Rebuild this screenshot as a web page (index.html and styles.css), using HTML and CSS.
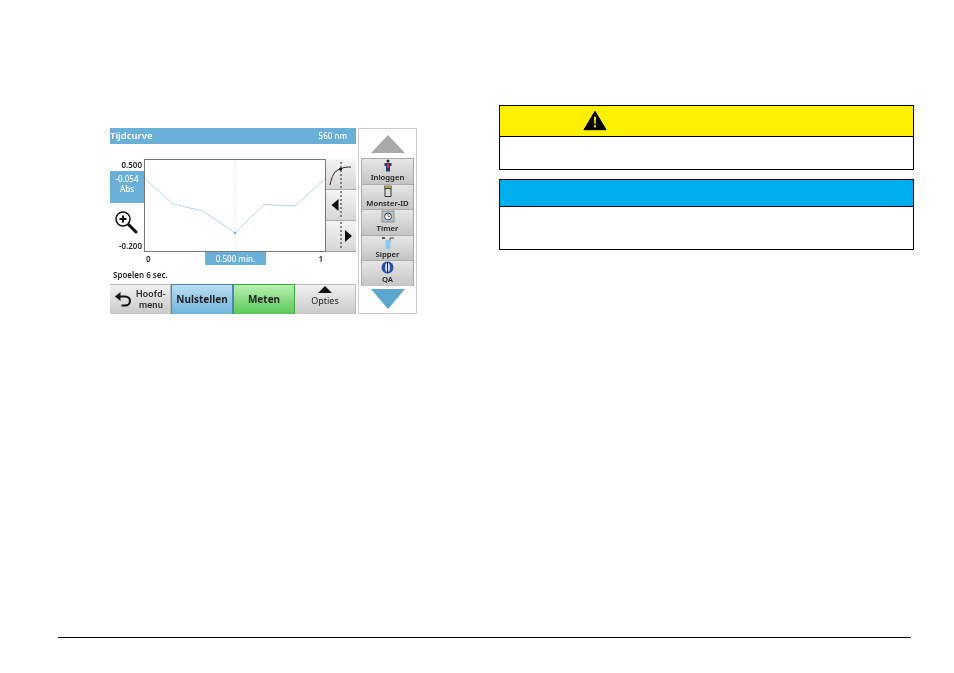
FILE: index.html
```html
<!doctype html>
<html>
<head>
 <title>Tijdcurve</title>
 <meta name=viewport content="width=device-width, initial-scale=1">
 <link rel="stylesheet" href="styles.css">
</head>
<body>
<div class=page>
 <div class=content>
  <div class=screen>
   <div class=main>
    <div class=title><span>Tijdcurve</span><span class=nm>560 nm</span></div>
    <div class=plot>
     <div class=yaxis>
      <div class=ylabel>0.500</div>
      <div class=absbox>-0.054<br>Abs</div>
      <div class=zoomicon>
       <svg width=24 height=24 viewBox="0 0 24 24">
        <line x1=13 y1=13 x2=22 y2=22 stroke="#111" stroke-width=3 stroke-linecap=round />
        <circle cx=9 cy=9 r=7 fill="#fff" stroke="#111" stroke-width=1.5 />
        <path d="M5.5 9h7M9 5.500v7" stroke="#111" stroke-width=2 />
       </svg>
      </div>
      <div class=ylabel>-0.200</div>
     </div>
     <div class=chart>
      <svg width=180 height=91 viewBox="145 160 180 91">
       <line x1=235 y1=160 x2=235 y2=251 stroke="#dbeaf3" stroke-width=1 stroke-dasharray="2 1" />
       <polyline points="144,178 173,204 203,211 235,233 264,204.500 295,206 326,178" fill=none stroke="#b4d6ea" stroke-width=1 />
       <circle cx=235 cy=233 r=1.300 fill="#6aafd6" />
      </svg>
     </div>
     <div class=tools>
      <div class=tool>
       <svg width=30 height=30 viewBox="0 0 30 30">
        <line x1=15 y1=3 x2=15 y2=29 stroke="#222" stroke-dasharray="2 2" />
        <path d="M4 26C6 17 8 12 14 10C18 8 22 8 25 8" fill=none stroke="#222" />
        <circle cx=14.500 cy=10 r=1.500 fill="#111" />
       </svg>
      </div>
      <div class=tool>
       <svg width=30 height=30 viewBox="0 0 30 30">
        <line x1=15 y1=1 x2=15 y2=29 stroke="#222" stroke-dasharray="2 2" />
        <path d="M12.500 9V21L5.500 15Z" fill="#111" />
       </svg>
      </div>
      <div class=tool>
       <svg width=30 height=30 viewBox="0 0 30 30">
        <line x1=15 y1=1 x2=15 y2=29 stroke="#222" stroke-dasharray="2 2" />
        <path d="M19 9V21L26 15Z" fill="#111" />
       </svg>
      </div>
     </div>
    </div>
    <div class=xaxis>
     <span class=x0>0</span>
     <span class=xbox>0.500 min.</span>
     <span class=x1>1</span>
    </div>
    <div class=status>Spoelen 6 sec.</div>
    <div class=buttons>
     <div class="btn back">
      <svg width=18 height=16 viewBox="0 0 18 16">
       <path d="M5 5.500H11C14 5.500 16 7.500 16 10C16 12.500 14 14.500 11 14.500H7.500" fill=none stroke="#111" stroke-width=2 />
       <path d="M6.500 1V10L1 5.500Z" fill="#111" />
      </svg>
      <span class=backtext>Hoofd-<br>menu</span>
     </div>
     <div class="btn blue">Nulstellen</div>
     <div class="btn green">Meten</div>
     <div class="btn opts"><i class=uptri></i>Opties</div>
    </div>
   </div>
   <div class=side>
    <div class="arrow"><i class=arrowup></i></div>
    <div class=item>
     <svg width=10 height=13 viewBox="0 0 10 13"><circle cx=5 cy=2 r=1.500 fill="#222" /><path d="M1.500 4H8.500V7H7V12.500H3V7H1.500Z" fill="#223a78" /><path d="M4 4.500H6V9H4Z" fill="#c8322e" /></svg>
     <span>Inloggen</span>
    </div>
    <div class=item>
     <svg width=10 height=13 viewBox="0 0 10 13"><rect x=1.500 y=1 width=7 height=2.500 fill="#c9b04e" stroke="#333" stroke-width=.5 /><path d="M2 3.500H8V11.500H2Z" fill="#ddd" stroke="#333" /></svg>
     <span>Monster-ID</span>
    </div>
    <div class=item>
     <svg width=14 height=13 viewBox="0 0 14 13"><rect x=1 y=1 width=12 height=11 fill="#b8c6d4" stroke="#555" stroke-width=.5 /><circle cx=7 cy=6.500 r=3.500 fill="#eee" stroke="#444" /><path d="M7 4V6.500H9" fill=none stroke="#444" stroke-width=.7 /></svg>
     <span>Timer</span>
    </div>
    <div class=item>
     <svg width=14 height=13 viewBox="0 0 14 13"><path d="M1 1H4V3H1Z" fill="#555" /><path d="M9 6V2H13" fill=none stroke="#444" /><rect x=4.500 y=4 width=5 height=9 fill="#8fc8ec" /></svg>
     <span>Sipper</span>
    </div>
    <div class=item>
     <svg width=13 height=13 viewBox="0 0 13 13"><circle cx=6.500 cy=6.500 r=6 fill="#2a4fa8" /><ellipse cx=6.500 cy=6.500 rx=2.500 ry=4.500 fill="#d8e2f0" /><line x1=6.500 y1=1 x2=6.500 y2=12 stroke="#223" /></svg>
     <span>QA</span>
    </div>
    <div class="arrow down"><i class=arrowdown></i></div>
   </div>
  </div>
  <div class=notes>
   <div class="note warn">
    <div class=notehead>
     <svg width=24 height=21 viewBox="0 0 26 22">
      <path d="M13 1L25 21H1Z" fill="#000" stroke="#000" stroke-linejoin=round />
      <path d="M11.700 7H14.300L13.600 15H12.400Z" fill="#fff000" />
      <rect x=12 y=16 width=2 height=2.500 fill="#fff000" />
     </svg>
    </div>
    <div class=notebody></div>
   </div>
   <div class="note info">
    <div class=notehead></div>
    <div class=notebody></div>
   </div>
  </div>
 </div>
 <div class=footer></div>
</div>
</body>
</html>
```

FILE: styles.css
```css
html, body {
  margin: 0;
  background: #fff;
  font-family: "Noto Sans", "Open Sans", Arial, sans-serif;
}
.page {
  height: 673px;
  display: flex;
  flex-direction: column;
  overflow: hidden;
}
.content {
  flex: 1;
  display: flex;
  align-items: flex-start;
  padding: 105px 0 0 110px;
}
.footer {
  height: 0;
  border-top: 1px solid #000;
  margin: 0 43px 35px 58px;
}

/* instrument screen */
.screen {
  margin-top: 23px;
  width: 307px;
  height: 186px;
  display: flex;
  justify-content: space-between;
  color: #222;
  font-size: 8px;
  font-weight: 600;
  filter: blur(0.35px);
}
.main {
  width: 246px;
  display: flex;
  flex-direction: column;
}
.title {
  height: 16px;
  box-sizing: border-box;
  background: #69afd7;
  color: #fff;
  display: flex;
  justify-content: space-between;
  align-items: center;
  font-size: 9.5px;
  padding: 0 9px 2px 0;
}
.title .nm { font-size: 8px; font-weight: 500; }
.plot {
  display: flex;
  padding-top: 15px;
  height: 93px;
}
.yaxis {
  width: 34px;
  display: flex;
  flex-direction: column;
}
.ylabel {
  height: 12px;
  line-height: 12px;
  text-align: right;
  padding-right: 2px;
}
.absbox {
  height: 32px;
  background: #69afd7;
  color: #fff;
  font-weight: 500;
  text-align: center;
  line-height: 10px;
  padding-top: 3px;
  box-sizing: border-box;
}
.zoomicon {
  flex: 1;
  display: flex;
  align-items: center;
  padding-left: 4px;
}
.chart {
  width: 180px;
  height: 91px;
  border: 1px solid #777;
  background: #fff;
}
.chart svg { display: block; }
.tools {
  width: 30px;
  display: flex;
  flex-direction: column;
}
.tool {
  flex: 1;
  background: linear-gradient(#f4f4f4, #d6d6d6);
  border: 1px solid #aaa;
  border-width: 0 0 1px 0;
  display: flex;
  align-items: center;
  justify-content: center;
}
.xaxis {
  height: 13px;
  display: flex;
  line-height: 13px;
  padding-left: 36px;
}
.x0 { width: 59px; }
.xbox {
  width: 61px;
  background: #69afd7;
  color: #fff;
  font-weight: 500;
  text-align: center;
}
.x1 {
  width: 57px;
  text-align: right;
}
.status {
  height: 19px;
  line-height: 20px;
  padding-left: 3px;
}
.buttons {
  height: 30px;
  display: flex;
}
.btn {
  flex: 1;
  display: flex;
  align-items: center;
  justify-content: center;
  box-sizing: border-box;
  border: 1px solid #bbb;
  border-width: 1px 1px 0 0;
  background: linear-gradient(#f1f1f1, #c9c9c9);
  padding-bottom: 2px;
}
.back {
  gap: 4px;
  text-align: center;
}
.backtext {
  font-family: Roboto, "Noto Sans", sans-serif;
  font-size: 9.300px;
  font-weight: 500;
  line-height: 11px;
  letter-spacing: 0.2px;
}
.blue, .green { font-size: 10px; font-weight: 700; }
.blue {
  background: linear-gradient(#b8def2, #6fb4dc);
  border: 1px solid #4d86b3;
  border-bottom: 0;
}
.green {
  background: linear-gradient(#b8f0b0, #58c858);
  border: 1px solid #3ba63b;
  border-bottom: 0;
}
.opts {
  flex-direction: column;
  justify-content: flex-start;
  font-weight: 400;
  font-size: 9px;
  line-height: 10px;
  gap: 3px;
  padding: 1px 0 0;
}
.uptri {
  width: 0;
  height: 0;
  border: 7px solid transparent;
  border-top: 0;
  border-bottom: 7px solid #111;
}

/* side menu */
.side {
  width: 59px;
  box-sizing: border-box;
  border: 1px solid #ccc;
  padding: 1px 2px;
  display: flex;
  flex-direction: column;
  background: #fff;
}
.arrow {
  height: 28px;
  display: flex;
  align-items: center;
  justify-content: center;
  flex: none;
}
.arrow.down { height: 26px; }
.arrowup {
  width: 0;
  height: 0;
  border: 17px solid transparent;
  border-top: 0;
  border-bottom: 18px solid #a9a9a9;
}
.arrowdown {
  width: 0;
  height: 0;
  border: 17.500px solid transparent;
  border-bottom: 0;
  border-top: 20px solid #5ba7cf;
}
.item {
  flex: 1;
  min-height: 0;
  box-sizing: border-box;
  border: 1px solid #aaa;
  border-width: 1px 1px 0 1px;
  background: linear-gradient(#e6e6e6, #c4c4c4);
  display: flex;
  flex-direction: column;
  align-items: center;
  justify-content: flex-start;
  line-height: 10px;
  font-size: 7.700px;
}
.item span { margin-top: 0; white-space: nowrap; }

/* notes */
.notes {
  margin-left: 82px;
  width: 415px;
  display: flex;
  flex-direction: column;
  gap: 9px;
}
.note {
  border: 1px solid #000;
  box-sizing: border-box;
}
.notehead {
  border-bottom: 1px solid #000;
  box-sizing: border-box;
}
.warn { height: 65px; }
.warn .notehead {
  height: 31px;
  background: #fff000;
  padding: 4px 0 0 83px;
}
.info { height: 71px; }
.info .notehead {
  height: 27px;
  background: #00aeef;
}
```
